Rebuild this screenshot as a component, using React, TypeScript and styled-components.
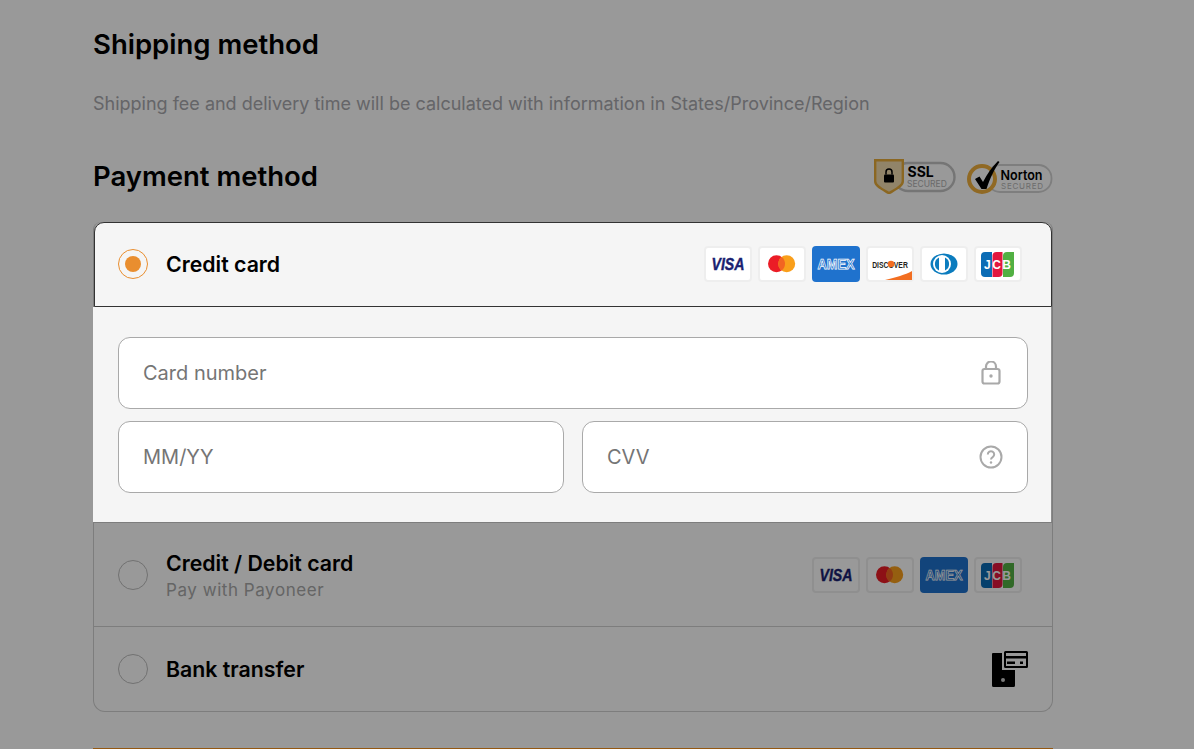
import React from "react";
import styled, { createGlobalStyle } from "styled-components";

const GlobalStyle = createGlobalStyle`
    html, body {
        margin: 0;
        padding: 0;
        height: 749px;
        overflow: hidden;
        background: #fff;
        font-family: Inter, "Liberation Sans", sans-serif;
    }
`;

const Page = styled.div`
    position: relative;
    height: 749px;
    overflow: hidden;
    padding: 27px 0 0 93px;
    box-sizing: border-box;
`;

const Overlay = styled.div`
    position: absolute;
    inset: 0;
    background: rgba(0, 0, 0, 0.4);
    z-index: 1;
`;

const Content = styled.div`
    width: 960px;
`;

const Heading = styled.h2`
    margin: 0;
    font-size: 27.5px;
    line-height: 34px;
    font-weight: 600;
    color: #000;
`;

const Hint = styled.p`
    margin: 29px 0 0;
    font-size: 18px;
    line-height: 28px;
    color: #a8a8ad;
`;

const PaymentHead = styled.div`
    display: flex;
    align-items: center;
    justify-content: space-between;
    height: 40px;
    box-sizing: border-box;
    padding-bottom: 1px;
    margin-top: 38px;
`;

const Badges = styled.div`
    display: flex;
    align-items: center;
    gap: 11px;
    margin-top: 1px;
`;

const MethodList = styled.div`
    margin-top: 26px;
    width: 960px;
    box-sizing: border-box;
    border: 1px solid #d0d0d0;
    border-top: none;
    border-radius: 8px 8px 12px 12px;
`;

const Spotlight = styled.section`
    position: relative;
    z-index: 2;
    width: 958px;
`;

const ActiveHeader = styled.div`
    display: flex;
    align-items: center;
    height: 85px;
    box-sizing: border-box;
    padding: 0 29px 2px 23px;
    background: #f5f5f5;
    border: 1px solid #333;
    border-radius: 10px 10px 0 0;
`;

const CardForm = styled.div`
    display: flex;
    flex-direction: column;
    gap: 12px;
    height: 215px;
    box-sizing: border-box;
    padding: 30px 23px 0 25px;
    background: #f5f5f5;
    margin-left: -1px;
    width: 959px;
    border-right: 1px solid #8c8c8c;
`;

const FieldRow = styled.div`
    display: grid;
    grid-template-columns: 1fr 1fr;
    gap: 18px;
`;

const Field = styled.div`
    display: flex;
    align-items: center;
    justify-content: space-between;
    height: 72px;
    box-sizing: border-box;
    padding: 0 24px;
    background: #fff;
    border: 1px solid #a9a9a9;
    border-radius: 12px;
`;

const Placeholder = styled.span`
    font-size: 20px;
    color: #757575;
`;

const MethodRow = styled.div<{ $height: number; $first?: boolean; $last?: boolean }>`
    display: flex;
    align-items: center;
    height: ${(p) => p.$height}px;
    box-sizing: border-box;
    padding: 0 30px 0 24px;
    border-top: ${(p) => (p.$first ? "1px solid #d0d0d0" : "none")};
    border-bottom: ${(p) => (p.$last ? "none" : "1px solid #d0d0d0")};
`;

const Radio = styled.span<{ $checked?: boolean }>`
    display: flex;
    align-items: center;
    justify-content: center;
    flex: none;
    width: 30px;
    height: 30px;
    box-sizing: border-box;
    border-radius: 50%;
    border: 1px solid ${(p) => (p.$checked ? "#e98e2f" : "#bdbdbd")};

    &::after {
        content: "";
        display: ${(p) => (p.$checked ? "block" : "none")};
        width: 16px;
        height: 16px;
        border-radius: 50%;
        background: #e98e2f;
    }
`;

const MethodText = styled.div`
    flex: 1;
    margin-left: 18px;
`;

const MethodName = styled.div`
    font-size: 21.3px;
    line-height: 26px;
    font-weight: 600;
    color: #000;
`;

const MethodNote = styled.div`
    margin: 2px 0 -2px;
    font-size: 17px;
    line-height: 24px;
    letter-spacing: 0.55px;
    color: #a8a8a8;
`;

const Logos = styled.div`
    display: flex;
    gap: 6px;
`;

const Tile = styled.span<{ $blue?: boolean }>`
    display: flex;
    align-items: center;
    justify-content: center;
    width: 48px;
    height: 36px;
    box-sizing: border-box;
    border-radius: 4px;
    background: ${(p) => (p.$blue ? "#1f72cd" : "#fff")};
    border: ${(p) => (p.$blue ? "none" : "2px solid #eee")};
`;

const BankGlyph = styled.svg`
    margin-right: -6px;
    flex: none;
`;

const OrangeLine = styled.div`
    position: absolute;
    left: 93px;
    bottom: 0;
    width: 960px;
    height: 1px;
    background: #f7931e;
`;

const VisaLogo = () => (
    <svg width="44" height="32" viewBox="0 0 44 32">
        <text x="22" y="21.5" textAnchor="middle" fontFamily="'Liberation Sans', sans-serif" fontSize="16" fontWeight="700" fontStyle="italic" fill="#1a1f71" stroke="#1a1f71" strokeWidth="0.4" textLength="33" lengthAdjust="spacingAndGlyphs">VISA</text>
    </svg>
);

const MastercardLogo = () => (
    <svg width="44" height="32" viewBox="0 0 44 32">
        <circle cx="16.500" cy="15.700" r="8.500" fill="#eb1c26" />
        <circle cx="26.700" cy="15.700" r="8.500" fill="#f99f1b" />
        <path d="M21.600 8.900a8.500 8.500 0 0 1 0 13.600a8.500 8.500 0 0 1 0-13.600z" fill="#f26522" />
    </svg>
);

const AmexLogo = () => (
    <svg width="48" height="36" viewBox="0 0 48 36">
        <text x="24" y="23" textAnchor="middle" fontFamily="'Liberation Sans', sans-serif" fontSize="14" fontWeight="700" fill="#1f72cd" stroke="#fff" strokeWidth="0.75" textLength="37" lengthAdjust="spacingAndGlyphs">AMEX</text>
    </svg>
);

const DiscoverLogo = () => (
    <svg width="44" height="32" viewBox="0 0 44 32">
        <path d="M17 32 C28 29 37 27 44 23 V32 Z" fill="#f26e21" />
        <text transform="translate(22 19.500) scale(0.72 1)" textAnchor="middle" fontFamily="'Liberation Sans', sans-serif" fontSize="9.500" fontWeight="700" fill="#231f20">DISCOVER</text>
        <circle cx="23" cy="16" r="3.300" fill="#f26e21" />
    </svg>
);

const DinersLogo = () => (
    <svg width="44" height="32" viewBox="0 0 44 32">
        <ellipse cx="22" cy="16" rx="13.500" ry="10.500" fill="#0b7cbe" />
        <circle cx="20" cy="16" r="9" fill="#fff" />
        <path d="M17 9.500a7.200 7.200 0 0 0 0 13z M23 9.500a7.200 7.200 0 0 1 0 13z" fill="#0b7cbe" />
    </svg>
);

const JcbLogo = () => (
    <svg width="44" height="32" viewBox="0 0 44 32">
        <path d="M5 8a4 4 0 0 1 4-4h7v25H9a4 4 0 0 1-4-4z" fill="#0b6cb5" />
        <path d="M16.500 8a4 4 0 0 1 4-4h6v21a4 4 0 0 1-4 4h-6z" fill="#e2173f" />
        <path d="M27 8a4 4 0 0 1 4-4h7v21a4 4 0 0 1-4 4h-7z" fill="#52b043" />
        <text x="21.500" y="21" textAnchor="middle" fontFamily="'Liberation Sans', sans-serif" fontSize="12" fontWeight="700" fill="#fff" textLength="27" lengthAdjust="spacing">JCB</text>
    </svg>
);

const SslBadge = () => (
    <svg width="82" height="36" viewBox="0 0 82 36">
        <rect x="20" y="5" width="60.500" height="28" rx="14" fill="none" stroke="#c4c4c4" strokeWidth="2.400" />
        <path d="M1.200 2.200h27.600v21c0 5-7 8-13.800 12c-6.800-4-13.800-7-13.800-12z" fill="#f2dcb0" stroke="#e8ac3a" strokeWidth="2.400" />
        <rect x="10" y="16.500" width="10" height="8" rx="1" fill="#000" />
        <path d="M12 16.500v-2.500a3 3 0 0 1 6 0v2.500" fill="none" stroke="#000" strokeWidth="1.500" />
        <text x="33.500" y="19" fontFamily="Inter, sans-serif" fontSize="14" fontWeight="700" fill="#000">SSL</text>
        <text x="33" y="29" fontFamily="Inter, sans-serif" fontSize="8.500" fill="#b0b0b0">SECURED</text>
    </svg>
);

const NortonBadge = () => (
    <svg width="86" height="36" viewBox="0 0 86 36">
        <rect x="20" y="7" width="64.500" height="27" rx="13" fill="none" stroke="#d2d2d2" strokeWidth="1.800" />
        <circle cx="15" cy="21" r="13" fill="#fff" stroke="#f0b03c" strokeWidth="4" />
        <path d="M8 21l4.500-2.500l3.500 5.500C20 16 25 9 31 3l1.500 1C28 10 23 20 19.500 31h-5z" fill="#000" />
        <text x="33.500" y="21.500" fontFamily="Inter, sans-serif" fontSize="13.500" fontWeight="600" fill="#000" textLength="42" lengthAdjust="spacingAndGlyphs">Norton</text>
        <text x="34" y="30.500" fontFamily="Inter, sans-serif" fontSize="8" fill="#b5b5b5" textLength="42" lengthAdjust="spacing">SECURED</text>
    </svg>
);

const LockIcon = () => (
    <svg width="24" height="24" viewBox="0 0 24 24" fill="none" stroke="#a9a9a9" strokeWidth="2.200">
        <rect x="3.500" y="8" width="17" height="14.500" rx="2" />
        <path d="M7 8V5.500a5 5 0 0 1 10 0V8" />
        <circle cx="12" cy="15" r="1.700" fill="#a9a9a9" stroke="none" />
    </svg>
);

const HelpIcon = () => (
    <svg width="24" height="24" viewBox="0 0 24 24" fill="none" stroke="#a9a9a9" strokeWidth="2">
        <circle cx="12" cy="12" r="10.500" />
        <path d="M8.800 9.400a3.200 3.200 0 1 1 4.900 2.700c-1 .6-1.700 1.200-1.700 2.400" />
        <circle cx="12" cy="17.500" r="1.200" fill="#a9a9a9" stroke="none" />
    </svg>
);

const BankIcon = () => (
    <BankGlyph width="38" height="38" viewBox="0 0 38 38">
        <path d="M3 3h9v17h13v15.500a1.500 1.500 0 0 1-1.500 1.500H3.500A1.500 1.500 0 0 1 2 35.500V4a1 1 0 0 1 1-1z" fill="#000" />
        <circle cx="13" cy="30" r="2" fill="#ccc" />
        <rect x="15" y="2" width="22" height="15" rx="0.500" fill="#fff" stroke="#000" strokeWidth="2" />
        <rect x="16" y="6" width="20" height="2.500" fill="#000" />
        <rect x="17" y="11.500" width="8" height="2.500" fill="#000" />
        <rect x="30" y="11.500" width="3" height="2.500" fill="#000" />
    </BankGlyph>
);

export default function App() {
    return (
        <Page>
            <GlobalStyle />
            <Content>
                <Heading>Shipping method</Heading>
                <Hint>Shipping fee and delivery time will be calculated with information in States/Province/Region</Hint>
                <PaymentHead>
                    <Heading>Payment method</Heading>
                    <Badges>
                        <SslBadge />
                        <NortonBadge />
                    </Badges>
                </PaymentHead>
                <MethodList>
                    <Spotlight>
                        <ActiveHeader>
                            <Radio $checked />
                            <MethodText>
                                <MethodName>Credit card</MethodName>
                            </MethodText>
                            <Logos>
                                <Tile><VisaLogo /></Tile>
                                <Tile><MastercardLogo /></Tile>
                                <Tile $blue><AmexLogo /></Tile>
                                <Tile><DiscoverLogo /></Tile>
                                <Tile><DinersLogo /></Tile>
                                <Tile><JcbLogo /></Tile>
                            </Logos>
                        </ActiveHeader>
                        <CardForm>
                            <Field>
                                <Placeholder>Card number</Placeholder>
                                <LockIcon />
                            </Field>
                            <FieldRow>
                                <Field>
                                    <Placeholder>MM/YY</Placeholder>
                                </Field>
                                <Field>
                                    <Placeholder>CVV</Placeholder>
                                    <HelpIcon />
                                </Field>
                            </FieldRow>
                        </CardForm>
                    </Spotlight>
                    <MethodRow $height={105} $first>
                        <Radio />
                        <MethodText>
                            <MethodName>Credit / Debit card</MethodName>
                            <MethodNote>Pay with Payoneer</MethodNote>
                        </MethodText>
                        <Logos>
                            <Tile><VisaLogo /></Tile>
                            <Tile><MastercardLogo /></Tile>
                            <Tile $blue><AmexLogo /></Tile>
                            <Tile><JcbLogo /></Tile>
                        </Logos>
                    </MethodRow>
                    <MethodRow $height={84} $last>
                        <Radio />
                        <MethodText>
                            <MethodName>Bank transfer</MethodName>
                        </MethodText>
                        <BankIcon />
                    </MethodRow>
                </MethodList>
            </Content>
            <OrangeLine />
            <Overlay />
        </Page>
    );
}
